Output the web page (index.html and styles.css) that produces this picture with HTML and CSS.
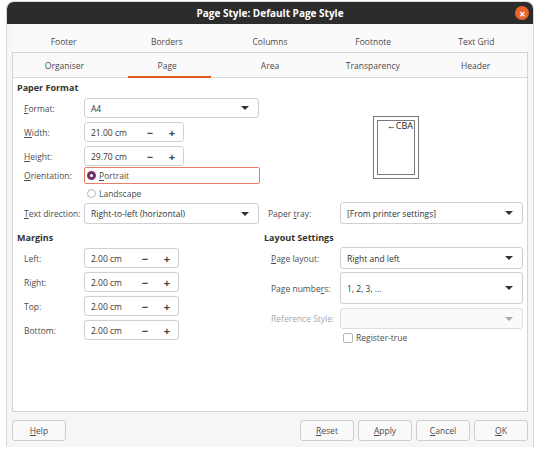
FILE: index.html
```html
<!DOCTYPE html>
<html lang="en">
<head>
    <meta charset="UTF-8">
    <title>Page Style: Default Page Style</title>
    <link rel="stylesheet" href="styles.css">
</head>
<body>
    <div class="window">
        <div class="titlebar">
            <span class="title">Page Style: Default Page Style</span>
            <span class="close">&#x2715;</span>
        </div>
        <div class="tabs tabs-back">
            <div class="tab">Footer</div>
            <div class="tab">Borders</div>
            <div class="tab">Columns</div>
            <div class="tab">Footnote</div>
            <div class="tab">Text Grid</div>
        </div>
        <div class="notebook">
            <div class="tabs tabs-front">
                <div class="tab">Organiser</div>
                <div class="tab active">Page</div>
                <div class="tab">Area</div>
                <div class="tab">Transparency</div>
                <div class="tab">Header</div>
            </div>
            <div class="page">
                <div class="paper">
                    <div class="col-left">
                        <h3>Paper Format</h3>
                        <div class="row">
                            <label><u>F</u>ormat:</label>
                            <div class="combo w175"><span>A4</span><span class="arrow"></span></div>
                        </div>
                        <div class="row">
                            <label><u>W</u>idth:</label>
                            <div class="spin w100"><span class="val">21.00 cm</span><span class="minus">&minus;</span><span class="plus">+</span></div>
                        </div>
                        <div class="row">
                            <label><u>H</u>eight:</label>
                            <div class="spin w100"><span class="val">29.70 cm</span><span class="minus">&minus;</span><span class="plus">+</span></div>
                        </div>
                        <div class="row orient">
                            <label><u>O</u>rientation:</label>
                            <div class="radios">
                                <div class="radio-box"><span class="radio checked"></span><u>P</u>ortrait</div>
                                <div class="radio-plain"><span class="radio"></span>Landscape</div>
                            </div>
                        </div>
                        <div class="row tight">
                            <label><u>T</u>ext direction:</label>
                            <div class="combo w175 h21"><span>Right-to-left (horizontal)</span><span class="arrow"></span></div>
                        </div>
                    </div>
                    <div class="col-right">
                        <div class="preview">
                            <div class="sheet"><span class="cba">&larr;CBA</span></div>
                        </div>
                        <div class="row tray">
                            <label>Paper <u>t</u>ray:</label>
                            <div class="combo w183 h22"><span>[From printer settings]</span><span class="arrow"></span></div>
                        </div>
                    </div>
                </div>
                <div class="lower">
                    <div class="col-left">
                        <h3>Margins</h3>
                        <div class="row">
                            <label>Left:</label>
                            <div class="spin w95"><span class="val">2.00 cm</span><span class="minus">&minus;</span><span class="plus">+</span></div>
                        </div>
                        <div class="row">
                            <label>Right:</label>
                            <div class="spin w95"><span class="val">2.00 cm</span><span class="minus">&minus;</span><span class="plus">+</span></div>
                        </div>
                        <div class="row">
                            <label>Top:</label>
                            <div class="spin w95"><span class="val">2.00 cm</span><span class="minus">&minus;</span><span class="plus">+</span></div>
                        </div>
                        <div class="row">
                            <label>Bottom:</label>
                            <div class="spin w95"><span class="val">2.00 cm</span><span class="minus">&minus;</span><span class="plus">+</span></div>
                        </div>
                    </div>
                    <div class="col-right">
                        <h3>Layout Settings</h3>
                        <div class="row snug">
                            <label class="wide"><u>P</u>age layout:</label>
                            <div class="combo w183 h22"><span>Right and left</span><span class="arrow"></span></div>
                        </div>
                        <div class="row snug">
                            <label class="wide">Page numbe<u>r</u>s:</label>
                            <div class="combo w183 h32"><span>1, 2, 3, ...</span><span class="arrow"></span></div>
                        </div>
                        <div class="row disabled">
                            <label class="wide">Reference Style:</label>
                            <div class="combo w183 h21"><span></span><span class="arrow"></span></div>
                        </div>
                        <div class="row check-row">
                            <span class="check"></span><span>Register-true</span>
                        </div>
                    </div>
                </div>
            </div>
        </div>
        <div class="buttons">
            <button class="btn"><u>H</u>elp</button>
            <div class="spacer"></div>
            <button class="btn"><u>R</u>eset</button>
            <button class="btn"><u>A</u>pply</button>
            <button class="btn"><u>C</u>ancel</button>
            <button class="btn"><u>O</u>K</button>
        </div>
    </div>
</body>
</html>
```

FILE: styles.css
```css
body {
    margin: 0;
    background: #fff;
    font-family: "Open Sans", "Noto Sans", sans-serif;
    font-size: 8.5px;
    color: #4d4d4d;
}
u { text-decoration-thickness: 1px; text-underline-offset: 1px; }
.window {
    margin: 2px 0 0 7px;
    width: 526px;
    height: 445px;
    background: #f6f6f6;
    border-radius: 7px 7px 0 0;
    box-shadow: 0 0 0 1px #d6d6d6;
    display: flex;
    flex-direction: column;
}
.titlebar {
    height: 22px;
    background: #2c2c2c;
    border-radius: 7px 7px 0 0;
    color: #fff;
    display: flex;
    align-items: center;
    justify-content: center;
    position: relative;
}
.title { font-weight: bold; font-size: 10px; }
.close {
    position: absolute;
    right: 4px;
    top: 4px;
    width: 14px;
    height: 14px;
    border-radius: 50%;
    background: #e8622d;
    color: #fff;
    font-size: 8px;
    font-weight: bold;
    display: flex;
    align-items: center;
    justify-content: center;
}
.tabs { display: flex; }
.tab { flex: 1; text-align: center; color: #4a4a4a; }
.tabs-back {
    height: 28px;
    box-sizing: border-box;
    padding-top: 6px;
    margin: 0 5px;
    align-items: center;
    background: #fafafa;
}
.notebook {
    margin: 0 5px;
    border: 1px solid #d4d4d4;
    background: #fff;
    height: 358px;
    display: flex;
    flex-direction: column;
}
.tabs-front {
    height: 24px;
    border-bottom: 1px solid #d9d9d9;
    background: #fafafa;
}
.tabs-front .tab { display: flex; align-items: center; justify-content: center; }
.tab.active { position: relative; }
.tab.active::after {
    content: "";
    position: absolute;
    left: 12px;
    right: 8px;
    bottom: -1px;
    height: 2px;
    background: #e2561f;
}
.page { padding: 4px 5px 0 4px; }
.paper, .lower { display: grid; grid-template-columns: 247px 1fr; }
.col-left, .col-right { display: flex; flex-direction: column; }
h3 {
    margin: 0;
    height: 12px;
    line-height: 12px;
    font-size: 9px;
    font-weight: bold;
    color: #333;
}
.row {
    display: flex;
    align-items: center;
    min-height: 20px;
    margin-top: 4px;
}
.row.tight { margin-top: 1px; }
.row.snug { margin-top: 3px; }
.row label { width: 60px; padding-left: 7px; flex: none; }
.row label.wide { width: 69px; }
.combo, .spin {
    box-sizing: border-box;
    height: 20px;
    border: 1px solid #cfcfcf;
    border-radius: 3px;
    background: #fff;
    display: flex;
    align-items: center;
    padding-left: 6px;
    color: #333;
}
.w175 { width: 175px; }
.w183 { width: 183px; }
.w100 { width: 100px; }
.w95 { width: 95px; }
.h21 { height: 21px; }
.h22 { height: 22px; }
.h32 { height: 32px; }
.combo span:first-child { flex: 1; }
.arrow {
    width: 0;
    height: 0;
    border-left: 4px solid transparent;
    border-right: 4px solid transparent;
    border-top: 4px solid #333;
    margin-right: 9px;
}
.spin .val { flex: 1; }
.spin .minus, .spin .plus {
    width: 22px;
    text-align: center;
    font-size: 11px;
    font-weight: bold;
    color: #444;
}
.orient { align-items: flex-start; margin-top: 1px; }
.orient label { padding-top: 3px; }
.radios { display: flex; flex-direction: column; }
.radio-box, .radio-plain {
    display: flex;
    align-items: center;
    height: 17px;
    box-sizing: border-box;
}
.radio-box {
    width: 176px;
    border: 1px solid #e97d6a;
    border-radius: 2px;
    padding-left: 2px;
}
.radio-plain { margin-top: 1px; padding-left: 3px; }
.radio {
    width: 9px;
    height: 9px;
    border-radius: 50%;
    border: 1px solid #b5b5b5;
    background: #fff;
    margin-right: 3px;
    box-sizing: border-box;
}
.radio.checked { border: 3px solid #75306a; background: #fff; }
.paper .col-right { justify-content: space-between; }
.preview {
    display: flex;
    padding: 38px 0 0 113px;
}
.sheet {
    width: 38px;
    height: 55px;
    box-sizing: border-box;
    border: 1px solid #7a7a7a;
    outline: 1px solid #7a7a7a;
    outline-offset: 3px;
    display: flex;
    justify-content: flex-end;
    align-items: flex-start;
}
.cba { font-size: 9px; line-height: 10px; margin-right: 1px; color: #222; }
.tray label { width: 76px; padding-left: 4px; box-sizing: border-box; }
.col-right label.wide { width: 69px; }
.lower { margin-top: 8px; }
.disabled { color: #a8a8a8; }
.disabled .combo { background: #fafafa; border-color: #dedede; }
.disabled .arrow { border-top-color: #aaa; }
.check-row { padding-left: 79px; min-height: 10px; margin-top: 3px; }
.check {
    width: 10px;
    height: 10px;
    border: 1px solid #b5b5b5;
    border-radius: 2px;
    margin-right: 3px;
    box-sizing: border-box;
}
.buttons {
    display: flex;
    gap: 4px;
    padding: 8px 5px 0;
}
.spacer { flex: 1; }
.btn {
    width: 54px;
    height: 21px;
    font-family: inherit;
    font-size: 8.5px;
    color: #4d4d4d;
    background: #f9f9f9;
    border: 1px solid #cdcdcd;
    border-radius: 3px;
    padding: 0;
}
```
